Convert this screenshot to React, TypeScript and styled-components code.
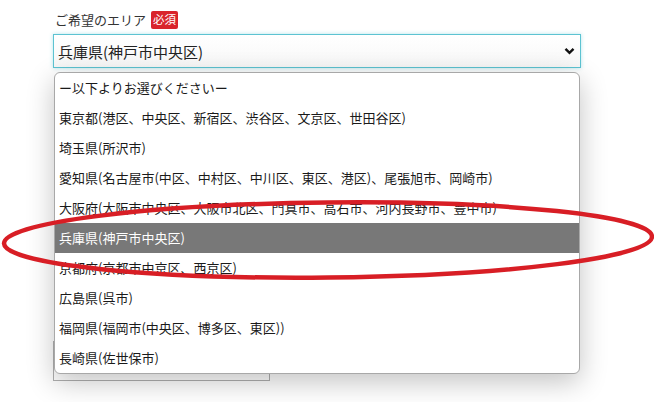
import React from "react";
import styled, { createGlobalStyle } from "styled-components";

const Global = createGlobalStyle`
  html, body { margin: 0; padding: 0; background: #fff; }
  body { font-family: "Noto Sans CJK JP", "Noto Sans", sans-serif; color: #222; }
`;

const Page = styled.div`
  position: relative;
  width: 654px;
  height: 402px;
  overflow: hidden;
  background: #fff;
`;

const Form = styled.div`
  width: 528px;
  margin-left: 53px;
  padding-top: 11px;
`;

const LabelRow = styled.div`
  display: flex;
  align-items: center;
  gap: 5px;
  height: 18px;
  padding-left: 2px;
`;

const LabelText = styled.span`
  font-size: 13px;
  color: #333;
  line-height: 18px;
`;

const Badge = styled.span`
  display: inline-flex;
  align-items: center;
  justify-content: center;
  height: 18px;
  padding: 0 2px;
  background: #d9242b;
  color: #fff;
  font-size: 11.5px;
  border-radius: 2px;
  line-height: 1;
`;

const SelectWrap = styled.div`
  position: relative;
  margin-top: 5px;
`;

const SelectBox = styled.div`
  display: flex;
  align-items: center;
  justify-content: space-between;
  box-sizing: border-box;
  height: 34px;
  padding: 0 5px 0 4px;
  border: 1px solid #5cc3d2;
  background: linear-gradient(#ffffff, #f7f7f7);
  box-shadow: 0 0 4px rgba(92, 195, 210, 0.45);
  font-size: 15px;
  color: #222;
`;

const Popup = styled.ul`
  position: absolute;
  top: 38px;
  left: 1px;
  width: 526px;
  margin: 0;
  padding: 0;
  list-style: none;
  box-sizing: border-box;
  border: 1px solid #a8a8a8;
  border-radius: 6px;
  background: #fff;
  box-shadow: 0 8px 28px rgba(0, 0, 0, 0.24);
  overflow: hidden;
  z-index: 2;
`;

const Option = styled.li<{ $active?: boolean }>`
  height: 30px;
  line-height: 30px;
  padding-left: 4px;
  font-size: 13px;
  white-space: nowrap;
  color: ${(p) => (p.$active ? "#fff" : "#1a1a1a")};
  background: ${(p) => (p.$active ? "#787878" : "transparent")};
`;

const HiddenField = styled.div`
  margin-top: 273px;
  width: 217px;
  height: 40px;
  box-sizing: border-box;
  border: 1px solid #b0b0b0;
  background: #fff;
`;

const Annotation = styled.svg`
  position: absolute;
  left: 0;
  top: 195px;
  width: 654px;
  height: 90px;
  pointer-events: none;
  z-index: 5;
`;

const options = [
  "ー以下よりお選びくださいー",
  "東京都(港区、中央区、新宿区、渋谷区、文京区、世田谷区)",
  "埼玉県(所沢市)",
  "愛知県(名古屋市(中区、中村区、中川区、東区、港区)、尾張旭市、岡崎市)",
  "大阪府(大阪市中央区、大阪市北区、門真市、高石市、河内長野市、豊中市)",
  "兵庫県(神戸市中央区)",
  "京都府(京都市中京区、西京区)",
  "広島県(呉市)",
  "福岡県(福岡市(中央区、博多区、東区))",
  "長崎県(佐世保市)",
];

export default function App() {
  const selected = 5;
  return (
    <Page>
      <Global />
      <Form>
        <LabelRow>
          <LabelText>ご希望のエリア</LabelText>
          <Badge>必須</Badge>
        </LabelRow>
        <SelectWrap>
          <SelectBox>
            <span>{options[selected]}</span>
            <svg width="11" height="8" viewBox="0 0 11 8">
              <path d="M1.5 1.8 L5.5 5.8 L9.5 1.8" fill="none" stroke="#111" strokeWidth="2.4" />
            </svg>
          </SelectBox>
          <Popup>
            {options.map((o, i) => (
              <Option key={i} $active={i === selected}>
                {o}
              </Option>
            ))}
          </Popup>
          <HiddenField />
        </SelectWrap>
      </Form>
      <Annotation viewBox="0 195 654 90">
        <ellipse
          cx="328"
          cy="240"
          rx="324"
          ry="37.5"
          fill="none"
          stroke="#d81e25"
          strokeWidth="4.5"
          transform="rotate(-0.6 328 240)"
        />
      </Annotation>
    </Page>
  );
}
